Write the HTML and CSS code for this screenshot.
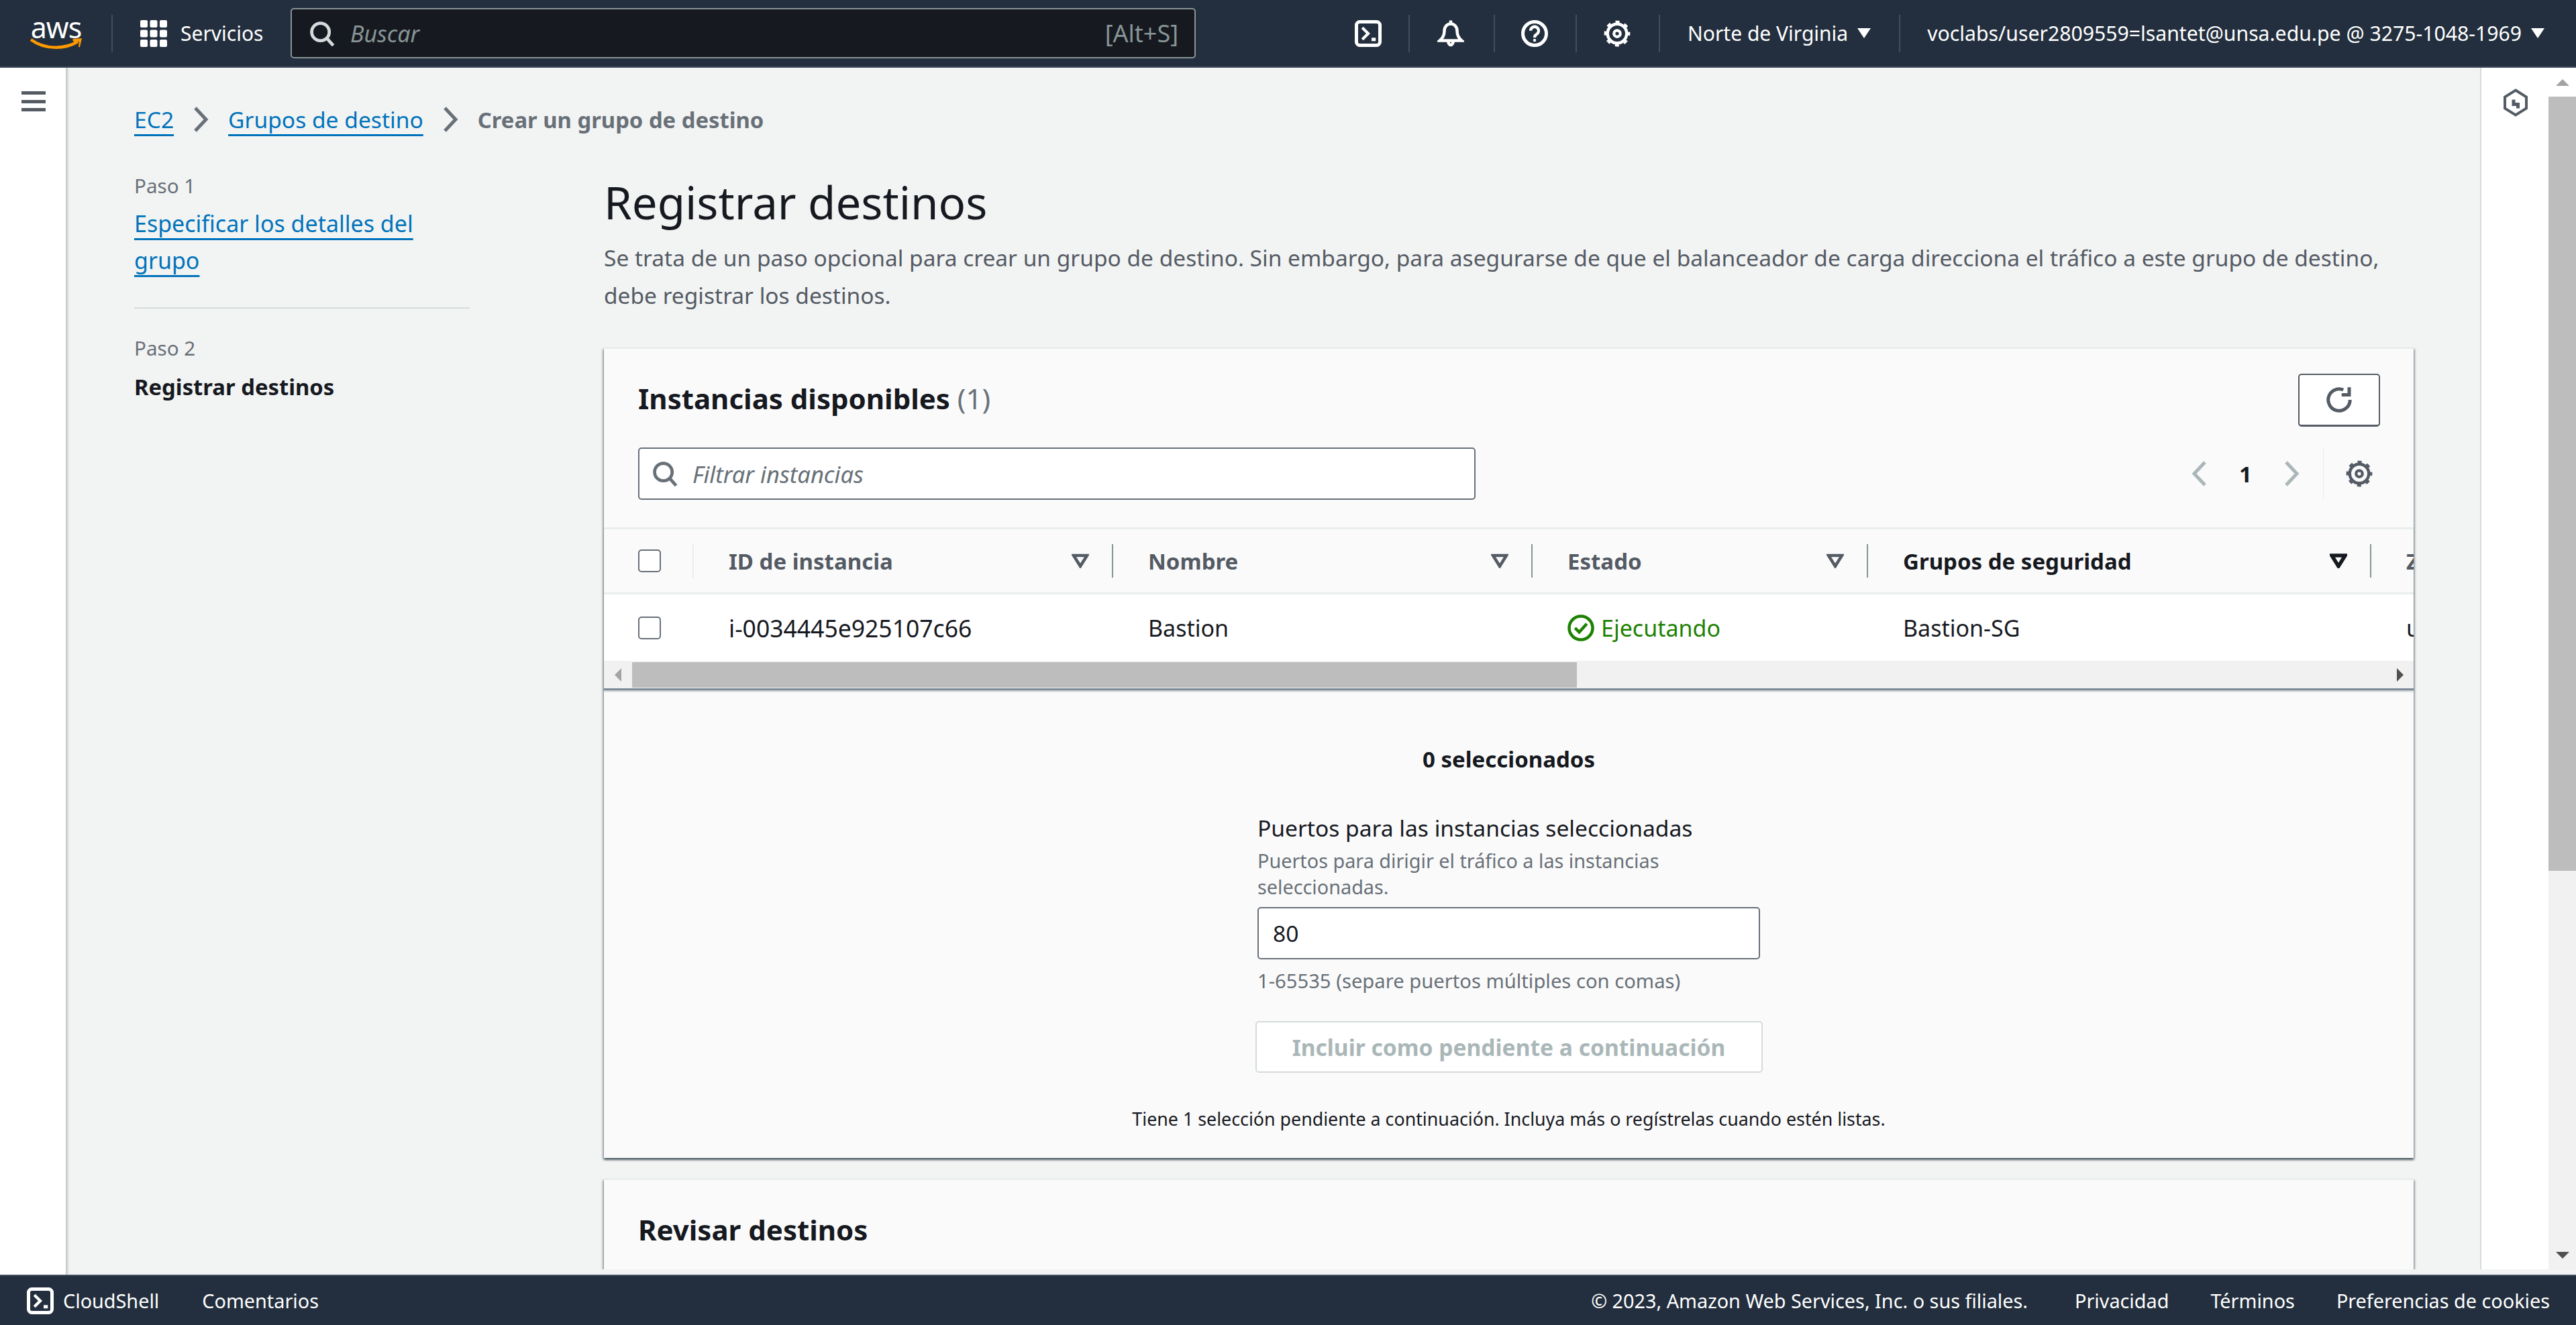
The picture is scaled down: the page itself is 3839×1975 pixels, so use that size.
FILE: index.html
```html
<!DOCTYPE html>
<html lang="es">
<head>
<meta charset="utf-8">
<title>Registrar destinos</title>
<link rel="stylesheet" href="styles.css">
</head>
<body>
<header class="top">
  <div class="logo">
    <span class="logo-text">aws</span>
    <svg class="logo-smile" viewBox="0 0 78 18"><path d="M1 3c20 15 50 15 70 3" fill="none" stroke="#f90" stroke-width="4.5"/><path d="M64 2l13-1-3 13c-1 1-2 0-2-1l1-7-8 0c-2-1-2-3-1-4z" fill="#f90"/></svg>
  </div>
  <span class="vline logo-line"></span>
  <div class="services">
    <svg class="i40" viewBox="0 0 40 40" fill="#fff"><rect x="0" y="0" width="11" height="11" rx="2"/><rect x="14.500" y="0" width="11" height="11" rx="2"/><rect x="29" y="0" width="11" height="11" rx="2"/><rect x="0" y="14.500" width="11" height="11" rx="2"/><rect x="14.500" y="14.500" width="11" height="11" rx="2"/><rect x="29" y="14.500" width="11" height="11" rx="2"/><rect x="0" y="29" width="11" height="11" rx="2"/><rect x="14.500" y="29" width="11" height="11" rx="2"/><rect x="29" y="29" width="11" height="11" rx="2"/></svg>
    <span class="services-text">Servicios</span>
  </div>
  <div class="search">
    <svg class="i38 search-icon" viewBox="0 0 16 16" fill="none" stroke="#d5dbdb" stroke-width="2"><circle cx="7" cy="7" r="5.500"/><path d="M11 11l4 4.500"/></svg>
    <span class="search-ph">Buscar</span>
    <span class="search-key">[Alt+S]</span>
  </div>
  <div class="hicons">
    <span class="hicon"><svg class="i40" viewBox="0 0 16 16" fill="none" stroke="#fff" stroke-width="2"><rect x="1" y="1" width="14" height="14" rx="2"/><path d="M4.500 4.500L8 8l-3.500 3.500" stroke-width="1.700"/><path d="M10 11.500h2.500" stroke-width="2"/></svg></span>
    <span class="hicon hicon-bell"><svg class="i40" viewBox="0 0 16 16" fill="none" stroke="#fff" stroke-width="1.800"><path d="M8 .2v2M1.500 12.200c2-1.700 2.700-3.200 2.700-5.700C4.200 4 5.800 2.200 8 2.200s3.800 1.800 3.800 4.300c0 2.500.7 4 2.700 5.700z"/><path d="M6.500 12.500a1.500 2.300 0 0 0 3 0"/></svg></span>
    <span class="hicon hicon-help"><svg class="i40" viewBox="0 0 16 16" fill="none" stroke="#fff" stroke-width="2"><circle cx="8" cy="8" r="7"/><path d="M5.600 6.300a2.400 2.400 0 1 1 3.600 2.100c-.8.500-1.200 1-1.200 2" stroke-width="1.700"/><circle cx="8" cy="12" r=".9" fill="#fff" stroke="none"/></svg></span>
    <span class="hicon hicon-gear"><svg class="i40" viewBox="0 0 16 16" fill="none" stroke="#fff"><circle cx="8" cy="8" r="5.700" stroke-width="1.800"/><circle cx="8" cy="8" r="6.900" stroke-width="1.700" stroke-dasharray="2.400 3.020" stroke-dashoffset="1.200"/><circle cx="8" cy="8" r="1.900" stroke-width="1.700"/></svg></span>
  </div>
  <div class="menu menu-region"><span>Norte de Virginia</span><i class="tri"></i></div>
  <span class="vline"></span>
  <div class="menu menu-user"><span class="user-name">voclabs/user2809559=lsantet@unsa.edu.pe @ 3275-1048-1969</span><i class="tri"></i></div>
</header>

<div class="workspace">
  <nav class="leftnav">
    <svg class="burger" viewBox="0 0 36 30" fill="#545b64"><rect y="0" width="36" height="5"/><rect y="13" width="36" height="5"/><rect y="25" width="36" height="5"/></svg>
  </nav>
  <div class="scrollarea">
    <main class="main">
      <div class="crumbs">
        <a class="link">EC2</a>
        <svg class="chev" viewBox="0 0 23 38" fill="none"><path d="M3 2l16 17L3 36"/></svg>
        <a class="link">Grupos de destino</a>
        <svg class="chev" viewBox="0 0 23 38" fill="none"><path d="M3 2l16 17L3 36"/></svg>
        <span class="crumb-now">Crear un grupo de destino</span>
      </div>
      <div class="layout">
        <aside class="steps">
          <div class="step-n">Paso 1</div>
          <a class="link step-link">Especificar los detalles del grupo</a>
          <div class="step-sep"></div>
          <div class="step-n">Paso 2</div>
          <div class="step-cur">Registrar destinos</div>
        </aside>
        <section class="content">
          <h1 class="title">Registrar destinos</h1>
          <p class="lead">Se trata de un paso opcional para crear un grupo de destino. Sin embargo, para asegurarse de que el balanceador de carga direcciona el tráfico a este grupo de destino, debe registrar los destinos.</p>

          <div class="card">
            <div class="card-head">
              <h2 class="h2 h2-up">Instancias disponibles <span class="count">(1)</span></h2>
              <button class="refresh"><svg class="i40" viewBox="0 0 16 16" fill="none" stroke="#545b64" stroke-width="2"><path d="M14.500 8A6.500 6.500 0 1 1 10.500 2"/><path d="M14 .5V5H9.500" stroke-width="2"/></svg></button>
            </div>
            <div class="tools">
              <div class="filter">
                <svg class="i38" viewBox="0 0 16 16" fill="none" stroke="#687078" stroke-width="2"><circle cx="7" cy="7" r="5.500"/><path d="M11 11l4 4.500"/></svg>
                <span class="filter-ph">Filtrar instancias</span>
              </div>
              <div class="pager">
                <svg class="chev chev-off" viewBox="0 0 23 38" fill="none"><path d="M20 2L4 19l16 17"/></svg>
                <span class="page">1</span>
                <svg class="chev chev-off" viewBox="0 0 23 38" fill="none"><path d="M3 2l16 17L3 36"/></svg>
                <span class="pager-gear"><svg class="i40" viewBox="0 0 16 16" fill="none" stroke="#545b64"><circle cx="8" cy="8" r="5.700" stroke-width="1.800"/><circle cx="8" cy="8" r="6.900" stroke-width="1.700" stroke-dasharray="2.400 3.020" stroke-dashoffset="1.200"/><circle cx="8" cy="8" r="1.900" stroke-width="1.700"/></svg></span>
              </div>
            </div>
            <div class="tablewrap">
              <div class="thead grid">
                <div class="th th-check"><i class="check"></i></div>
                <div class="th">ID de instancia<svg class="fil" viewBox="0 0 26 22"><path d="M3 3h20L13 19z"/></svg></div>
                <div class="th">Nombre<svg class="fil" viewBox="0 0 26 22"><path d="M3 3h20L13 19z"/></svg></div>
                <div class="th">Estado<svg class="fil" viewBox="0 0 26 22"><path d="M3 3h20L13 19z"/></svg></div>
                <div class="th th-sorted">Grupos de seguridad<svg class="fil" viewBox="0 0 26 22"><path d="M3 3h20L13 19z"/></svg></div>
                <div class="th th-last">Z</div>
              </div>
              <div class="trow grid">
                <div class="td td-check"><i class="check"></i></div>
                <div class="td td-id">i-0034445e925107c66</div>
                <div class="td">Bastion</div>
                <div class="td td-ok"><svg class="i40 ok-icon" viewBox="0 0 16 16" fill="none" stroke="#1d8102" stroke-width="1.800"><circle cx="8" cy="8" r="7"/><path d="M4.500 8l2.500 2.500 4.500-5"/></svg>Ejecutando</div>
                <div class="td">Bastion-SG</div>
                <div class="td">u</div>
              </div>
              <div class="hbar">
                <i class="arr arr-l"></i>
                <span class="hthumb"></span>
                <i class="arr arr-r"></i>
              </div>
            </div>
            <div class="pick">
              <div class="pick-n">0 seleccionados</div>
              <div class="form">
                <div class="f-label">Puertos para las instancias seleccionadas</div>
                <div class="f-desc">Puertos para dirigir el tráfico a las instancias seleccionadas.</div>
                <div class="f-input">80</div>
                <div class="f-hint">1-65535 (separe puertos múltiples con comas)</div>
              </div>
              <div class="btn-off">Incluir como pendiente a continuación</div>
              <div class="pick-note">Tiene 1 selección pendiente a continuación. Incluya más o regístrelas cuando estén listas.</div>
            </div>
          </div>

          <div class="card card-review">
            <h2 class="h2">Revisar destinos</h2>
          </div>
        </section>
      </div>
    </main>
    <aside class="rightnav">
      <svg class="hex" viewBox="0 0 38 42" fill="none" stroke="#545b64" stroke-width="4"><path d="M19 2.500l16 10v17l-16 10-16-10v-17z"/><path d="M16 16.500v7h6.500v6" stroke-width="5"/></svg>
    </aside>
    <div class="vbar">
      <span class="vbtn"><i class="arr arr-u"></i></span>
      <span class="vthumb"></span>
      <span class="vtrack"></span>
      <span class="vbtn vbtn-d"><i class="arr arr-d"></i></span>
    </div>
  </div>
</div>

<footer class="foot">
  <div class="foot-l">
    <svg class="i40" viewBox="0 0 16 16" fill="none" stroke="#fff" stroke-width="2"><rect x="1" y="1" width="14" height="14" rx="2"/><path d="M4.500 4.500L8 8l-3.500 3.500" stroke-width="1.700"/><path d="M10 11.500h2.500"/></svg>
    <span class="foot-cs">CloudShell</span>
    <span class="foot-co">Comentarios</span>
  </div>
  <div class="foot-r">
    <span>© 2023, Amazon Web Services, Inc. o sus filiales.</span>
    <span class="foot-a foot-first">Privacidad</span>
    <span class="foot-a">Términos</span>
    <span class="foot-a">Preferencias de cookies</span>
  </div>
</footer>
</body>
</html>
```
FILE: styles.css
```css
* { box-sizing: border-box; }
html, body { height: 100%; }
body {
  margin: 0;
  height: 1975px;
  display: flex;
  flex-direction: column;
  overflow: hidden;
  background: #f2f3f3;
  color: #16191f;
  font-family: "Noto Sans", "Open Sans", sans-serif;
  font-size: 33.6px;
}
.i40 { width: 40px; height: 40px; flex: none; display: block; }
.i38 { width: 38px; height: 38px; flex: none; display: block; }

/* top bar */
.top {
  flex: none;
  height: 101px;
  background: #232f3e;
  border-bottom: 2px solid #414d5c;
  display: flex;
  align-items: center;
  color: #fff;
  font-size: 30px;
  padding-left: 45px;
}
.logo { width: 77px; height: 48px; position: relative; flex: none; }
.logo-text { display: block; text-align: center; font-size: 43px; line-height: 30px; height: 30px; letter-spacing: -1px; }
.logo-smile { display: block; width: 78px; height: 18px; }
.vline { width: 2px; height: 56px; background: #414d5c; flex: none; }
.logo-line { margin-left: 44px; }
.services { display: flex; align-items: center; margin-left: 41px; flex: none; width: 181px; }
.services-text { margin-left: 20px; }
.search {
  flex: none;
  width: 1349px;
  height: 75px;
  margin-left: 43px;
  background: #16191f;
  border: 2px solid #879596;
  border-radius: 5px;
  display: flex;
  align-items: center;
  padding: 0 24px 0 26px;
  color: #879596;
  font-size: 34px;
}
.search-icon { margin-right: 23px; }
.search-ph { font-style: italic; }
.search-key { margin-left: auto; font-size: 36px; }
.hicons { display: flex; margin-left: 197px; flex: none; }
.hicon { height: 56px; padding: 8px 40px; border-right: 2px solid #414d5c; display: block; }
.hicon-bell { padding: 8px 44px 8px 41px; }
.hicon-help { padding: 8px 41px 8px 39px; }
.hicon-gear { padding: 8px 42px 8px 40px; }
.menu { display: flex; align-items: center; flex: none; }
.menu-region { margin: 0 42px 0 41px; }
.menu-user { margin-left: 40px; }
.user-name { font-size: 30.2px; }
.tri {
  display: block;
  margin-left: 14px;
  width: 0; height: 0;
  border-left: 10px solid transparent;
  border-right: 10px solid transparent;
  border-top: 15px solid #fff;
}

/* workspace */
.workspace { flex: 1; min-height: 0; display: flex; }
.leftnav {
  flex: none;
  width: 100px;
  background: #fff;
  border-right: 2px solid #c8cccc;
  box-shadow: 1px 0 3px rgba(0, 28, 36, .2);
  padding: 35px 0 0 32px;
}
.burger { display: block; width: 36px; height: 30px; }
.scrollarea { flex: 1; min-width: 0; display: flex; margin-bottom: 8px; overflow: hidden; }
.main { flex: 1; min-width: 0; padding: 0 99px 0 100px; overflow: hidden; }

.link {
  color: #0073bb;
  text-decoration: underline;
  text-decoration-thickness: 3px;
  text-underline-offset: 9px;
  text-decoration-skip-ink: none;
}
.crumbs { display: flex; align-items: center; height: 58px; margin-top: 48px; }
.chev { width: 23px; height: 38px; flex: none; stroke: #687078; stroke-width: 5px; display: block; }
.crumbs .chev { margin: 0 29px; }
.crumb-now { color: #687078; font-weight: 700; font-size: 32.8px; }
.layout { display: grid; grid-template-columns: 500px minmax(0, 1fr); gap: 200px; margin-top: 49px; }

/* steps */
.steps { padding-top: 1px; }
.step-n { font-size: 29.6px; line-height: 40px; color: #687078; }
.step-link { display: block; width: 470px; margin-top: 9px; font-size: 34px; line-height: 55px; }
.step-sep { height: 2px; background: #d5dbdb; margin: 42px 0 39px; }
.step-cur { font-weight: 700; font-size: 32.8px; line-height: 56px; margin-top: 10px; }

/* content */
.title { margin: 0; font-size: 67.2px; line-height: 90px; font-weight: 400; }
.lead { margin: 10px 0 0; font-size: 33.5px; line-height: 56px; color: #545b64; }
.card {
  margin-top: 50px;
  background: #fafafa;
  border-top: 2px solid #eaeded;
  box-shadow: 0 3px 3px rgba(0, 28, 36, .5), 2px 2px 3px rgba(0, 28, 36, .25), -2px 2px 3px rgba(0, 28, 36, .25);
}
.card-head { display: flex; justify-content: space-between; align-items: center; padding: 37px 50px 0 51px; }
.h2 { margin: 0; font-size: 42px; line-height: 60px; font-weight: 700; }
.h2-up { margin-bottom: 6px; }
.count { color: #687078; font-weight: 400; }
.refresh {
  width: 122px;
  height: 79px;
  background: #fff;
  border: 2px solid #545b64;
  border-bottom-width: 3px;
  border-radius: 5px;
  display: flex;
  align-items: center;
  justify-content: center;
  padding: 0;
}
.tools { display: flex; align-items: center; justify-content: space-between; margin-top: 31px; padding: 0 61px 0 51px; height: 78px; }
.filter {
  width: 1248px;
  height: 78px;
  background: #fff;
  border: 2px solid #687078;
  border-radius: 5px;
  display: flex;
  align-items: center;
  padding-left: 19px;
  color: #687078;
}
.filter-ph { font-style: italic; font-size: 34.5px; margin-left: 22px; }
.pager { display: flex; align-items: center; }
.chev-off { stroke: #aab7b8; }
.page { width: 115px; text-align: center; font-weight: 700; font-size: 33px; }
.pager-gear { height: 78px; margin-left: 35px; padding: 19px 0 0 33px; border-left: 1px solid #eaeded; display: block; }

.tablewrap {
  margin-top: 41px;
  overflow: hidden;
  border-top: 3px solid #eaeded;
  border-bottom: 3px solid #7d8998;
  box-shadow: 0 2px 2px rgba(0, 28, 36, .2);
}
.grid { display: grid; grid-template-columns: 134px 625px 625px 500px 750px 500px; width: 3134px; align-items: center; }
.thead { height: 97px; border-bottom: 3px solid #eaeded; color: #545b64; font-weight: 700; font-size: 33px; }
.trow { height: 99px; background: #fff; font-size: 34px; }
.th {
  height: 50px;
  border-right: 2px solid #879596;
  display: flex;
  align-items: center;
  justify-content: space-between;
  padding: 0 34px 0 52px;
}
.th-check { border-right-color: #eaeded; padding: 0 0 0 51px; }
.th-sorted { color: #16191f; }
.th-last { border-right: 0; }
.fil { width: 26px; height: 22px; flex: none; fill: none; stroke: #545b64; stroke-width: 4.500px; display: block; }
.th-sorted .fil { stroke: #16191f; stroke-width: 5.500px; }
.td { padding-left: 52px; }
.td-id { font-size: 35.5px; }
.td-check { padding-left: 51px; }
.td-ok { display: flex; align-items: center; color: #1d8102; }
.ok-icon { margin-right: 10px; }
.check { display: block; width: 34px; height: 34px; background: #fff; border: 2px solid #687078; border-radius: 5px; }
.hbar { height: 41px; background: #f1f1f1; display: flex; align-items: center; }
.hthumb { width: 1408px; height: 38px; background: #bdbdbd; margin-left: 16px; }
.arr { display: block; width: 0; height: 0; flex: none; }
.arr-l { margin-left: 16px; border-top: 10px solid transparent; border-bottom: 10px solid transparent; border-right: 10px solid #a3a3a3; }
.arr-r { margin-left: auto; margin-right: 15px; border-top: 10px solid transparent; border-bottom: 10px solid transparent; border-left: 10px solid #505050; }
.arr-u { border-left: 10px solid transparent; border-right: 10px solid transparent; border-bottom: 10px solid #a3a3a3; }
.arr-d { border-left: 10px solid transparent; border-right: 10px solid transparent; border-top: 10px solid #505050; }

.pick { padding: 78px 0 38px; display: flex; flex-direction: column; align-items: center; }
.pick-n { font-weight: 700; font-size: 33px; line-height: 50px; }
.form { width: 749px; margin-top: 52px; }
.f-label { line-height: 50px; }
.f-desc { font-size: 28.8px; line-height: 39px; color: #687078; margin-top: 4px; }
.f-input {
  height: 78px;
  margin-top: 11px;
  background: #fff;
  border: 2px solid #687078;
  border-radius: 5px;
  display: flex;
  align-items: center;
  padding-left: 21px;
}
.f-hint { font-size: 29.2px; line-height: 40px; color: #687078; margin-top: 12px; }
.btn-off {
  width: 756px;
  height: 77px;
  margin-top: 40px;
  background: #fff;
  border: 2px solid #d5dbdb;
  border-radius: 5px;
  color: #aab7b8;
  font-weight: 700;
  display: flex;
  align-items: center;
  justify-content: center;
}
.pick-note { font-size: 26.8px; line-height: 40px; margin-top: 49px; }
.card-review { margin-top: 31px; padding: 44px 51px 200px; }

/* right rail and scrollbar */
.rightnav {
  flex: none;
  width: 102px;
  background: #fff;
  border-left: 2px solid #d5dbdb;
  padding: 31px 0 0 32px;
}
.hex { display: block; width: 38px; height: 42px; }
.vbar { flex: none; width: 41px; background: #f1f1f1; display: flex; flex-direction: column; }
.vbtn { height: 43px; flex: none; display: flex; justify-content: center; align-items: center; background: #fff; }
.vbtn-d { background: #f1f1f1; }
.vthumb { height: 1154px; flex: none; background: #bdbdbd; }
.vtrack { flex: 1; }

/* footer */
.foot {
  flex: none;
  height: 75px;
  background: #232f3e;
  border-top: 2px solid #414d5c;
  color: #fff;
  font-size: 28.8px;
  display: flex;
  align-items: center;
  justify-content: space-between;
  padding: 0 39px 0 40px;
}
.foot-l, .foot-r { display: flex; align-items: center; }
.foot-cs { margin-left: 14px; }
.foot-co { margin-left: 64px; }
.foot-a { margin-left: 62px; }
.foot-first { margin-left: 70px; }
```
